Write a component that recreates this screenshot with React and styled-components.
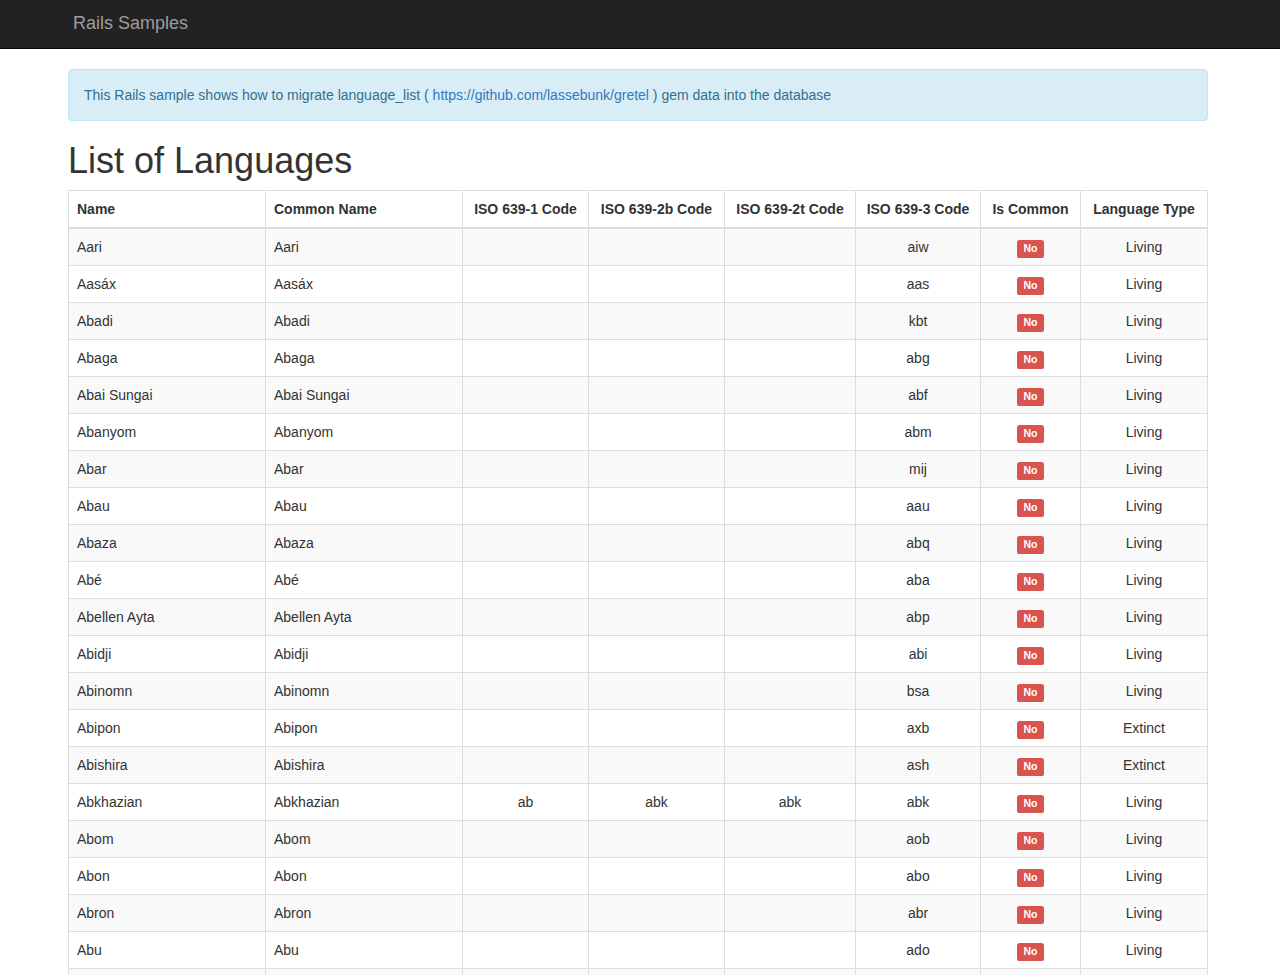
import React from "react";
import styled, { createGlobalStyle } from "styled-components";

const GlobalStyle = createGlobalStyle`
  * { box-sizing: border-box; }
  body {
    margin: 0;
    font-family: "Liberation Sans", Arial, sans-serif;
    font-size: 14px;
    line-height: 1.42857;
    color: #333;
    background: #fff;
  }
`;

const NavBar = styled.nav`
  height: 49px;
  background: #222;
  border-bottom: 1px solid #080808;
`;

const NavInner = styled.div`
  width: 1140px;
  margin-left: 68px;
  display: flex;
  align-items: center;
  height: 48px;
`;

const Brand = styled.a`
  font-size: 18px;
  line-height: 20px;
  color: #9d9d9d;
  text-decoration: none;
  padding-left: 5px;
  padding-bottom: 2px;
`;

const Container = styled.main`
  width: 1140px;
  margin-left: 68px;
  padding-top: 20px;
`;

const Alert = styled.div`
  padding: 16px 15px 14px;
  border: 1px solid #bce8f1;
  border-radius: 4px;
  background: #d9edf7;
  color: #31708f;
  margin-bottom: 20px;

  a {
    color: #337ab7;
    text-decoration: none;
  }
`;

const Title = styled.h1`
  font-size: 36px;
  font-weight: 500;
  line-height: 1.1;
  margin: 0 0 9px;
`;

const Table = styled.table`
  width: 1139px;
  table-layout: fixed;
  border-collapse: collapse;
  border: 1px solid #ddd;

  th, td {
    padding: 8px;
    border: 1px solid #ddd;
    line-height: 20px;
    vertical-align: top;
    white-space: nowrap;
    overflow: hidden;
  }
  th {
    font-weight: bold;
    border-bottom-width: 2px;
  }
  tbody tr:nth-child(odd) {
    background: #f9f9f9;
  }
`;

const Cell = styled.td`
  text-align: ${p => (p.$left ? "left" : "center")};
`;

const Head = styled.th`
  text-align: ${p => (p.$left ? "left" : "center")};
`;

const Label = styled.span`
  display: inline;
  padding: 0.2em 0.6em 0.3em;
  font-size: 75%;
  font-weight: bold;
  line-height: 1;
  color: #fff;
  background: #d9534f;
  border-radius: 0.25em;
  vertical-align: -1px;
`;

const widths = [197, 197, 126, 136, 131, 125, 100, 127];

const headers = [
  ["Name", true],
  ["Common Name", true],
  ["ISO 639-1 Code"],
  ["ISO 639-2b Code"],
  ["ISO 639-2t Code"],
  ["ISO 639-3 Code"],
  ["Is Common"],
  ["Language Type"],
];

const languages = [
  ["Aari", "", "", "", "aiw", "Living"],
  ["Aasáx", "", "", "", "aas", "Living"],
  ["Abadi", "", "", "", "kbt", "Living"],
  ["Abaga", "", "", "", "abg", "Living"],
  ["Abai Sungai", "", "", "", "abf", "Living"],
  ["Abanyom", "", "", "", "abm", "Living"],
  ["Abar", "", "", "", "mij", "Living"],
  ["Abau", "", "", "", "aau", "Living"],
  ["Abaza", "", "", "", "abq", "Living"],
  ["Abé", "", "", "", "aba", "Living"],
  ["Abellen Ayta", "", "", "", "abp", "Living"],
  ["Abidji", "", "", "", "abi", "Living"],
  ["Abinomn", "", "", "", "bsa", "Living"],
  ["Abipon", "", "", "", "axb", "Extinct"],
  ["Abishira", "", "", "", "ash", "Extinct"],
  ["Abkhazian", "ab", "abk", "abk", "abk", "Living"],
  ["Abom", "", "", "", "aob", "Living"],
  ["Abon", "", "", "", "abo", "Living"],
  ["Abron", "", "", "", "abr", "Living"],
  ["Abu", "", "", "", "ado", "Living"],
  ["Abua", "", "", "", "abn", "Living"],
  ["Abui", "", "", "", "abz", "Living"],
];

const App = () => {
  return (
    <>
      <GlobalStyle />
      <NavBar>
        <NavInner>
          <Brand href="#">Rails Samples</Brand>
        </NavInner>
      </NavBar>
      <Container>
        <Alert>
          This Rails sample shows how to migrate language_list ({" "}
          <a href="#">https://github.com/lassebunk/gretel</a> ) gem data into
          the database
        </Alert>
        <Title>List of Languages</Title>
        <Table>
          <colgroup>
            {widths.map((w, i) => (
              <col key={i} style={{ width: w }} />
            ))}
          </colgroup>
          <thead>
            <tr>
              {headers.map(([h, left]) => (
                <Head key={h} $left={left}>
                  {h}
                </Head>
              ))}
            </tr>
          </thead>
          <tbody>
            {languages.map(([name, c1, c2b, c2t, c3, type]) => (
              <tr key={name}>
                <Cell $left>{name}</Cell>
                <Cell $left>{name}</Cell>
                <Cell>{c1}</Cell>
                <Cell>{c2b}</Cell>
                <Cell>{c2t}</Cell>
                <Cell>{c3}</Cell>
                <Cell>
                  <Label>No</Label>
                </Cell>
                <Cell>{type}</Cell>
              </tr>
            ))}
          </tbody>
        </Table>
      </Container>
    </>
  );
};

export default App;
